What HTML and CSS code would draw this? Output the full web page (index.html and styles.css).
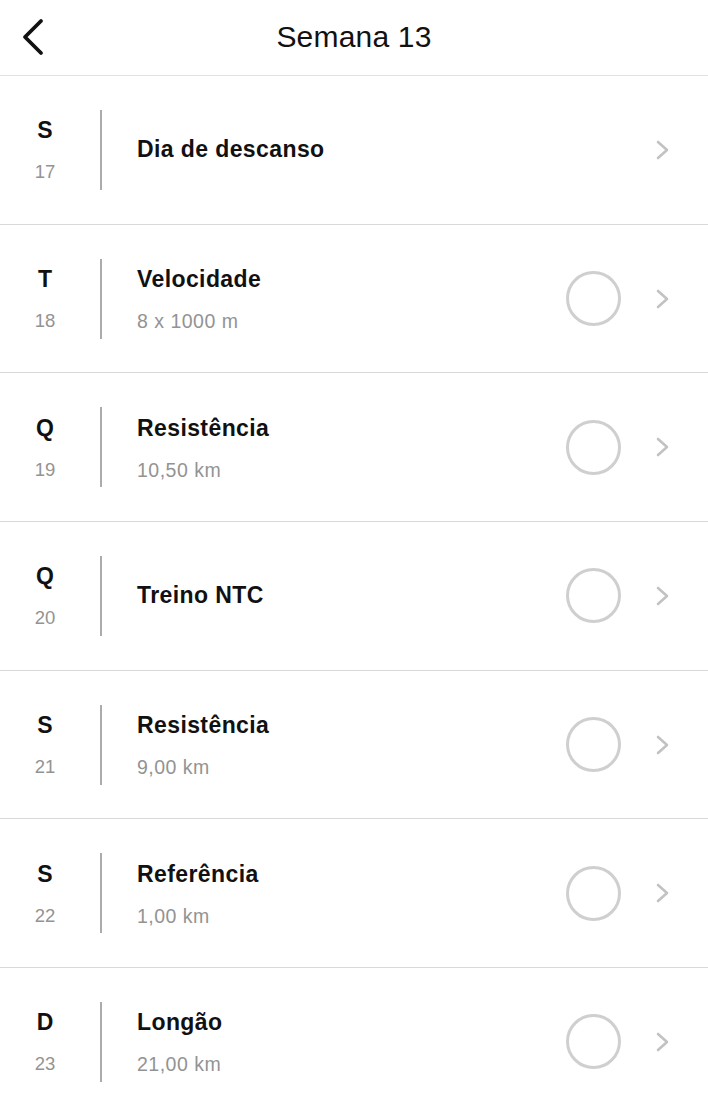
FILE: index.html
```html
<!DOCTYPE html>
<html lang="pt">
<head>
<meta charset="utf-8">
<title>Semana 13</title>
<link rel="stylesheet" href="styles.css">
</head>
<body>
<header class="header">
  <div class="back">
    <svg width="28" height="42" viewBox="0 0 28 42"><path d="M23 5 L7 21 L23 37" fill="none" stroke="#111" stroke-width="3.8" stroke-linecap="round" stroke-linejoin="round"/></svg>
  </div>
  <h1 class="title">Semana 13</h1>
  <div></div>
</header>
<ul class="list">
  <li class="row">
    <div class="day"><span class="letter">S</span><span class="num">17</span></div>
    <div class="divider"></div>
    <div class="content"><span class="name">Dia de descanso</span></div>
    <svg class="chev" width="16" height="22" viewBox="0 0 16 22"><path d="M3 3 L12 11 L3 19" fill="none" stroke="#c2c2c2" stroke-width="2.6" stroke-linecap="round" stroke-linejoin="round"/></svg>
  </li>
  <li class="row">
    <div class="day"><span class="letter">T</span><span class="num">18</span></div>
    <div class="divider"></div>
    <div class="content"><span class="name">Velocidade</span><span class="sub">8 x 1000 m</span></div>
    <div class="circle"></div>
    <svg class="chev" width="16" height="22" viewBox="0 0 16 22"><path d="M3 3 L12 11 L3 19" fill="none" stroke="#c2c2c2" stroke-width="2.6" stroke-linecap="round" stroke-linejoin="round"/></svg>
  </li>
  <li class="row">
    <div class="day"><span class="letter">Q</span><span class="num">19</span></div>
    <div class="divider"></div>
    <div class="content"><span class="name">Resistência</span><span class="sub">10,50 km</span></div>
    <div class="circle"></div>
    <svg class="chev" width="16" height="22" viewBox="0 0 16 22"><path d="M3 3 L12 11 L3 19" fill="none" stroke="#c2c2c2" stroke-width="2.6" stroke-linecap="round" stroke-linejoin="round"/></svg>
  </li>
  <li class="row">
    <div class="day"><span class="letter">Q</span><span class="num">20</span></div>
    <div class="divider"></div>
    <div class="content"><span class="name">Treino NTC</span></div>
    <div class="circle"></div>
    <svg class="chev" width="16" height="22" viewBox="0 0 16 22"><path d="M3 3 L12 11 L3 19" fill="none" stroke="#c2c2c2" stroke-width="2.6" stroke-linecap="round" stroke-linejoin="round"/></svg>
  </li>
  <li class="row">
    <div class="day"><span class="letter">S</span><span class="num">21</span></div>
    <div class="divider"></div>
    <div class="content"><span class="name">Resistência</span><span class="sub">9,00 km</span></div>
    <div class="circle"></div>
    <svg class="chev" width="16" height="22" viewBox="0 0 16 22"><path d="M3 3 L12 11 L3 19" fill="none" stroke="#c2c2c2" stroke-width="2.6" stroke-linecap="round" stroke-linejoin="round"/></svg>
  </li>
  <li class="row">
    <div class="day"><span class="letter">S</span><span class="num">22</span></div>
    <div class="divider"></div>
    <div class="content"><span class="name">Referência</span><span class="sub">1,00 km</span></div>
    <div class="circle"></div>
    <svg class="chev" width="16" height="22" viewBox="0 0 16 22"><path d="M3 3 L12 11 L3 19" fill="none" stroke="#c2c2c2" stroke-width="2.6" stroke-linecap="round" stroke-linejoin="round"/></svg>
  </li>
  <li class="row">
    <div class="day"><span class="letter">D</span><span class="num">23</span></div>
    <div class="divider"></div>
    <div class="content"><span class="name">Longão</span><span class="sub">21,00 km</span></div>
    <div class="circle"></div>
    <svg class="chev" width="16" height="22" viewBox="0 0 16 22"><path d="M3 3 L12 11 L3 19" fill="none" stroke="#c2c2c2" stroke-width="2.6" stroke-linecap="round" stroke-linejoin="round"/></svg>
  </li>
</ul>
</body>
</html>
```

FILE: styles.css
```css
* { box-sizing: border-box; }
html, body { margin: 0; padding: 0; background: #fff; }
body {
  font-family: "Liberation Sans", Arial, Helvetica, sans-serif;
  color: #111;
  overflow: hidden;
}
.header {
  height: 76px;
  border-bottom: 1px solid #e2e2e2;
  display: grid;
  grid-template-columns: 1fr auto 1fr;
  align-items: center;
}
.back {
  justify-self: start;
  margin-left: 18px;
  height: 42px;
  margin-top: -2px;
}
.back svg { display: block; }
.title {
  margin: 0;
  font-size: 30px;
  font-weight: 400;
  letter-spacing: 0.2px;
  color: #111;
  margin-top: -2px;
}
.list {
  list-style: none;
  margin: 0;
  padding: 0;
}
.row {
  height: 148.7px;
  border-bottom: 1px solid #d9d9d9;
  display: flex;
  align-items: center;
}
.day {
  width: 90px;
  display: flex;
  flex-direction: column;
  align-items: center;
  margin-top: 3px;
}
.letter {
  font-size: 23px;
  font-weight: 700;
  line-height: 24px;
  color: #111;
}
.num {
  font-size: 18.5px;
  line-height: 24px;
  margin-top: 18px;
  color: #939393;
}
.divider {
  width: 2px;
  height: 80px;
  background: #ababab;
  margin: 0 35px 0 10px;
}
.content {
  flex: 1;
  display: flex;
  flex-direction: column;
  margin-top: 3px;
}
.name {
  font-size: 23px;
  font-weight: 700;
  line-height: 24px;
  letter-spacing: 0.4px;
  color: #111;
}
.sub {
  font-size: 19.5px;
  line-height: 24px;
  margin-top: 18px;
  letter-spacing: 0.5px;
  color: #939393;
}
.content:has(.name:only-child) { margin-top: -2px; }
.circle {
  width: 55px;
  height: 55px;
  border: 3px solid #cfcfcf;
  border-radius: 50%;
  margin-right: 34px;
}
.chev {
  display: block;
  margin-right: 37px;
}
```
